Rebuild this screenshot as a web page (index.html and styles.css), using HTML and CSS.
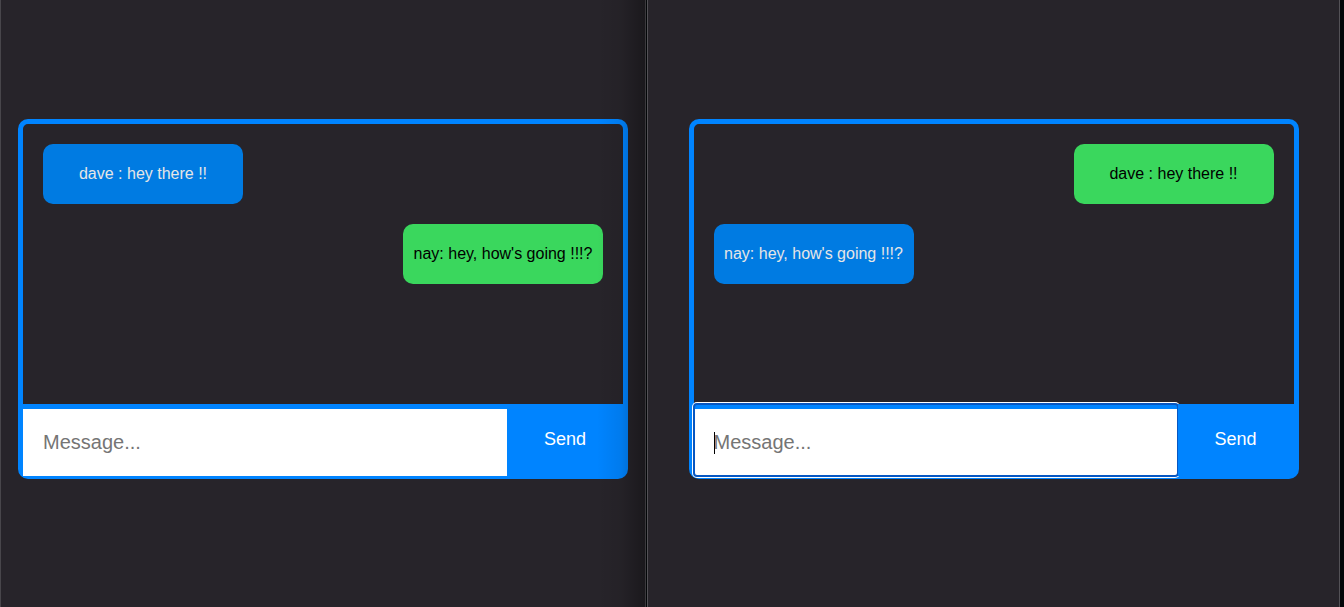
FILE: index.html
```html
<!DOCTYPE html>
<html lang="en">
<head>
<meta charset="utf-8">
<title>Chat</title>
<link rel="stylesheet" href="styles.css">
</head>
<body>
<main class="desktop">
  <section class="window window-left">
    <div class="chat">
      <div class="messages">
        <p class="message received">dave : hey there !!</p>
        <p class="message sent">nay: hey, how's going !!!?</p>
      </div>
      <form class="composer">
        <div class="field"><input class="text-input" type="text" placeholder="Message..." aria-label="Message"></div>
        <button class="send" type="button">Send</button>
      </form>
    </div>
  </section>
  <section class="window window-right">
    <div class="chat">
      <div class="messages">
        <p class="message sent">dave : hey there !!</p>
        <p class="message received">nay: hey, how's going !!!?</p>
      </div>
      <form class="composer">
        <div class="field"><input class="text-input active" type="text" placeholder="Message..." aria-label="Message"><span class="caret"></span></div>
        <button class="send" type="button">Send</button>
      </form>
    </div>
  </section>
</main>
</body>
</html>
```
FILE: styles.css
```css
* {
  box-sizing: border-box;
}

body {
  margin: 0;
  background: #030608;
  font-family: "Liberation Sans", Arial, sans-serif;
}

.desktop {
  display: grid;
  grid-template-columns: 646fr 693fr;
  column-gap: 1px;
  min-height: 100vh;
  padding-right: 4px;
}

.window {
  position: relative;
  display: flex;
  align-items: center;
  justify-content: center;
  padding-bottom: 10px;
  background: #27242a;
  border-right: 1px solid #535156;
}

.window-left {
  border-left: 1px solid #48464b;
  border-right-color: #3b393d;
}

.window-right {
  border-left: 1px solid #535156;
}

/* shadow cast by the window in front */
.window-left::after {
  content: "";
  position: absolute;
  inset: 0 0 0 auto;
  z-index: 3;
  width: 48px;
  background: linear-gradient(to right, rgba(0, 0, 0, 0), rgba(0, 0, 0, 0.07) 50%, rgba(0, 0, 0, 0.32));
  pointer-events: none;
}

.chat {
  width: 610px;
  max-width: 100%;
  border: 5px solid #0084ff;
  border-bottom-width: 3px;
  border-radius: 10px;
  background: #27242a;
}

.messages {
  display: flex;
  flex-direction: column;
  gap: 20px;
  min-height: 280px;
  padding: 20px;
}

.message {
  display: flex;
  align-items: center;
  justify-content: center;
  width: 200px;
  height: 60px;
  margin: 0;
  border-radius: 10px;
  font-size: 16px;
  line-height: 20px;
}

.received {
  align-self: flex-start;
  background: #007be2;
  color: #e6e6e6;
}

.sent {
  align-self: flex-end;
  background: #3ad75d;
  color: #000;
}

.composer {
  display: flex;
  height: 72px;
  background: #0084ff;
}

.field {
  position: relative;
  flex: 1;
}

.text-input {
  display: block;
  width: 100%;
  height: 100%;
  padding: 0 20px;
  border: 0;
  border-top: 5px solid #0084ff;
  border-radius: 0;
  outline: none;
  background: #fff;
  color: #000;
  font: inherit;
  font-size: 20px;
}

.text-input::placeholder {
  color: #757575;
}

.active {
  border-radius: 3px;
  outline: 2px solid #0757c2;
  outline-offset: -1px;
  box-shadow: 0 0 0 2px #fff;
}

.caret {
  position: absolute;
  top: 28px;
  left: 20px;
  width: 1px;
  height: 22px;
  background: #000;
}

.send {
  position: relative;
  z-index: 1;
  width: 116px;
  padding: 0;
  border: 0;
  background: #0084ff;
  color: #fff;
  font: inherit;
  font-size: 18px;
}
```
